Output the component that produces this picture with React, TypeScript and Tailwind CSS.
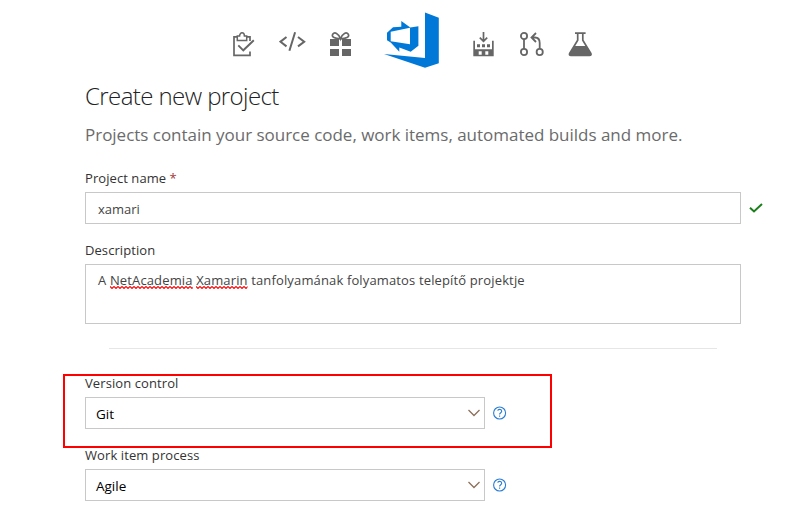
import React from "react";

function Toolbar() {
  return (
    <header className="flex h-[76px] items-start pl-[233px] pt-3 text-[#666]">
      <svg className="mt-5 h-[25px] w-[22px]" viewBox="0 0 22 25" fill="none" stroke="currentColor" strokeWidth="1.7">
        <path d="M4.5 4.8H1V23.3H17V19.5M13.5 4.8H17V9" />
        <path d="M4.3 4V8.6H13.7V4H11.4C11.4-.2 6.6-.2 6.6 4Z" strokeWidth="1.5" />
        <path d="M5.3 13.3 10.3 18.3 20.8 8.2" strokeWidth="1.9" />
      </svg>
      <svg className="ml-6 mt-5 h-[20px] w-[27px]" viewBox="0 0 27 20" fill="none" stroke="currentColor" strokeWidth="2">
        <path d="M7.5 5 1.5 9.7 7.5 14.4M16.1.3 10.4 18.8M19 5 25.2 9.7 19 14.4" />
      </svg>
      <svg className="ml-6 mt-5 h-[25px] w-[21px]" viewBox="0 0 21 25" fill="currentColor">
        <path d="M0 7H9V14H0ZM12 7H21V14H12ZM0 17H9V24H0ZM12 17H21V24H12Z" />
        <path d="M10.5 6.8C8.5 1 4.5-.3 2.7 2.3 1.2 5.2 5 6.5 10.5 6.8 16 6.5 19.8 5.2 18.3 2.3 16.5-.3 12.5 1 10.5 6.8Z" fill="none" stroke="currentColor" strokeWidth="1.7" />
      </svg>
      <svg className="ml-[33px] h-[56px] w-[55px]" viewBox="0 0 55 56" fill="#0078d7">
        <path d="M41 .6 54.8 5.7V51.3L41 55.7 0 42 41 45.9Z" />
        <path fillRule="evenodd" d="M3 20.7 9 15.3 17.3 14.8V9L26.3 15.6 34.4 14.2V33.7L26.7 39.7 15.3 35.5V39.7L6.7 30.5 3 28.3ZM6.7 19.7V29.3L26 32.3V15.7Z" />
      </svg>
      <svg className="ml-[34px] mt-5 h-[25px] w-[21px]" viewBox="0 0 21 25" fill="currentColor">
        <path fillRule="evenodd" d="M.3 8.7H2V17.3H19V8.7H20.7V24.2H.3ZM5.7 19.3V22.7H8.7V19.3ZM12.3 19.3V22.7H15.3V19.3Z" />
        <path d="M4 12.2H7V15.2H4ZM9 12.2H12V15.2H9ZM14 12.2H17V15.2H14Z" />
        <path d="M10.5 0V9.3M6.8 5.7 10.5 9.3 14.2 5.7" fill="none" stroke="currentColor" strokeWidth="1.7" />
      </svg>
      <svg className="ml-[26px] mt-5 h-[25px] w-[24px]" viewBox="0 0 24 25" fill="none" stroke="currentColor" strokeWidth="1.8">
        <circle cx="4" cy="4" r="3.1" />
        <circle cx="4" cy="20" r="3.1" />
        <circle cx="19.7" cy="20" r="3.1" />
        <path d="M4 7V17M11.7 5.5H15C18.5 5.5 19.7 8 19.7 11V17M16 1 11.5 5.5 16 10" />
      </svg>
      <svg className="ml-[24px] mt-5 h-[25px] w-[25px]" viewBox="0 0 25 25" fill="none" stroke="currentColor" strokeWidth="1.7">
        <path d="M7 1.2H17.6M9.7 1V8.2L1.8 21.2C1 22.6 1.5 23.4 3 23.4H21.5C23 23.4 23.5 22.6 22.7 21.2L14.8 8.2V1" />
        <path d="M6 14H18.5L23 21.5C23.5 23 22.8 23.5 21.5 23.5H3C1.8 23.5 1 23 1.5 21.5Z" fill="currentColor" stroke="none" />
      </svg>
    </header>
  );
}

function Misspelled({ word }: { word: string }) {
  const id = `squiggle-${word}`;
  return (
    <span className="relative inline-block">
      {word}
      <svg className="absolute left-0 top-[21px] h-[3px] w-full" aria-hidden="true">
        <defs>
          <pattern id={id} width="4" height="3" patternUnits="userSpaceOnUse">
            <path d="M-1 1.5 0 .5 2 2.5 4 .5 5 1.5" fill="none" stroke="#f00" strokeWidth="1.1" />
          </pattern>
        </defs>
        <rect width="100%" height="3" fill={`url(#${id})`} />
      </svg>
    </span>
  );
}

function SelectRow({ label, value }: { label: string; value: string }) {
  return (
    <div className="h-[72px]">
      <div className="h-[22px] text-[13px] leading-[16px] tracking-[0.09px] text-[#333]">{label}</div>
      <div className="flex items-center">
        <div className="flex h-8 w-[400px] items-center justify-between border border-[#c8c8c8] pl-[10px] pr-1">
          <span className="pt-0.5 text-[13.5px] leading-5 text-black">{value}</span>
          <svg className="h-2 w-3" viewBox="0 0 12 8" fill="none" stroke="#8d6f5a" strokeWidth="1.3">
            <path d="M.5 1 6 6.5 11.5 1" />
          </svg>
        </div>
        <svg className="ml-2 h-[14px] w-[14px]" viewBox="0 0 14 14" fill="none" stroke="#2b7cd3" strokeWidth="1.1">
          <circle cx="6.6" cy="7" r="6" />
          <path d="M4.7 4.7C5 2.9 8.7 2.9 8.7 5.2 8.7 6.8 6.6 6.6 6.6 8.5M6.6 9.6V10.8" />
        </svg>
      </div>
    </div>
  );
}

export default function App() {
  return (
    <div className="relative h-[524px] w-[787px] overflow-hidden bg-white font-['Open_Sans','Noto_Sans',sans-serif]">
      <Toolbar />
      <main className="pl-[85px]">
        <h1 className="h-[43px] whitespace-nowrap text-[24px] font-light leading-[40px] tracking-[-0.58px] text-[#222]">Create new project</h1>
        <p className="h-[49px] whitespace-nowrap text-[17px] leading-[31px] tracking-[-0.02px] text-[#6b6b6b]">Projects contain your source code, work items, automated builds and more.</p>
        <div className="h-6 text-[13px] leading-[20px] tracking-[0.07px] text-[#333]">
          Project name <span className="text-[#a4373a]">*</span>
        </div>
        <div className="flex items-center">
          <div className="h-8 w-[656px] border border-[#c8c8c8] pl-3 text-[13px] leading-[33px] text-[#444]">xamari</div>
          <svg className="ml-2 h-[10px] w-[14px]" viewBox="0 0 14 10" fill="none" stroke="#1a7f1a" strokeWidth="2">
            <path d="M1 4.8 5 8.5 13 1" />
          </svg>
        </div>
        <div className="mt-4 h-6 text-[13px] leading-[20px] tracking-[0.07px] text-[#333]">Description</div>
        <div className="h-[60px] w-[656px] whitespace-nowrap border border-[#c8c8c8] pl-3 text-[13px] leading-[31px] tracking-[0.14px] text-[#444]">
          A <Misspelled word="NetAcademia" /> <Misspelled word="Xamarin" /> tanfolyamának folyamatos telepítő projektje
        </div>
        <hr className="mb-[26px] ml-6 mt-6 w-[608px] border-[#e6e6e6]" />
        <SelectRow label="Version control" value="Git" />
        <SelectRow label="Work item process" value="Agile" />
      </main>
      <div className="absolute left-[63px] top-[374px] h-[74px] w-[489px] border-2 border-[#f00]" />
    </div>
  );
}
